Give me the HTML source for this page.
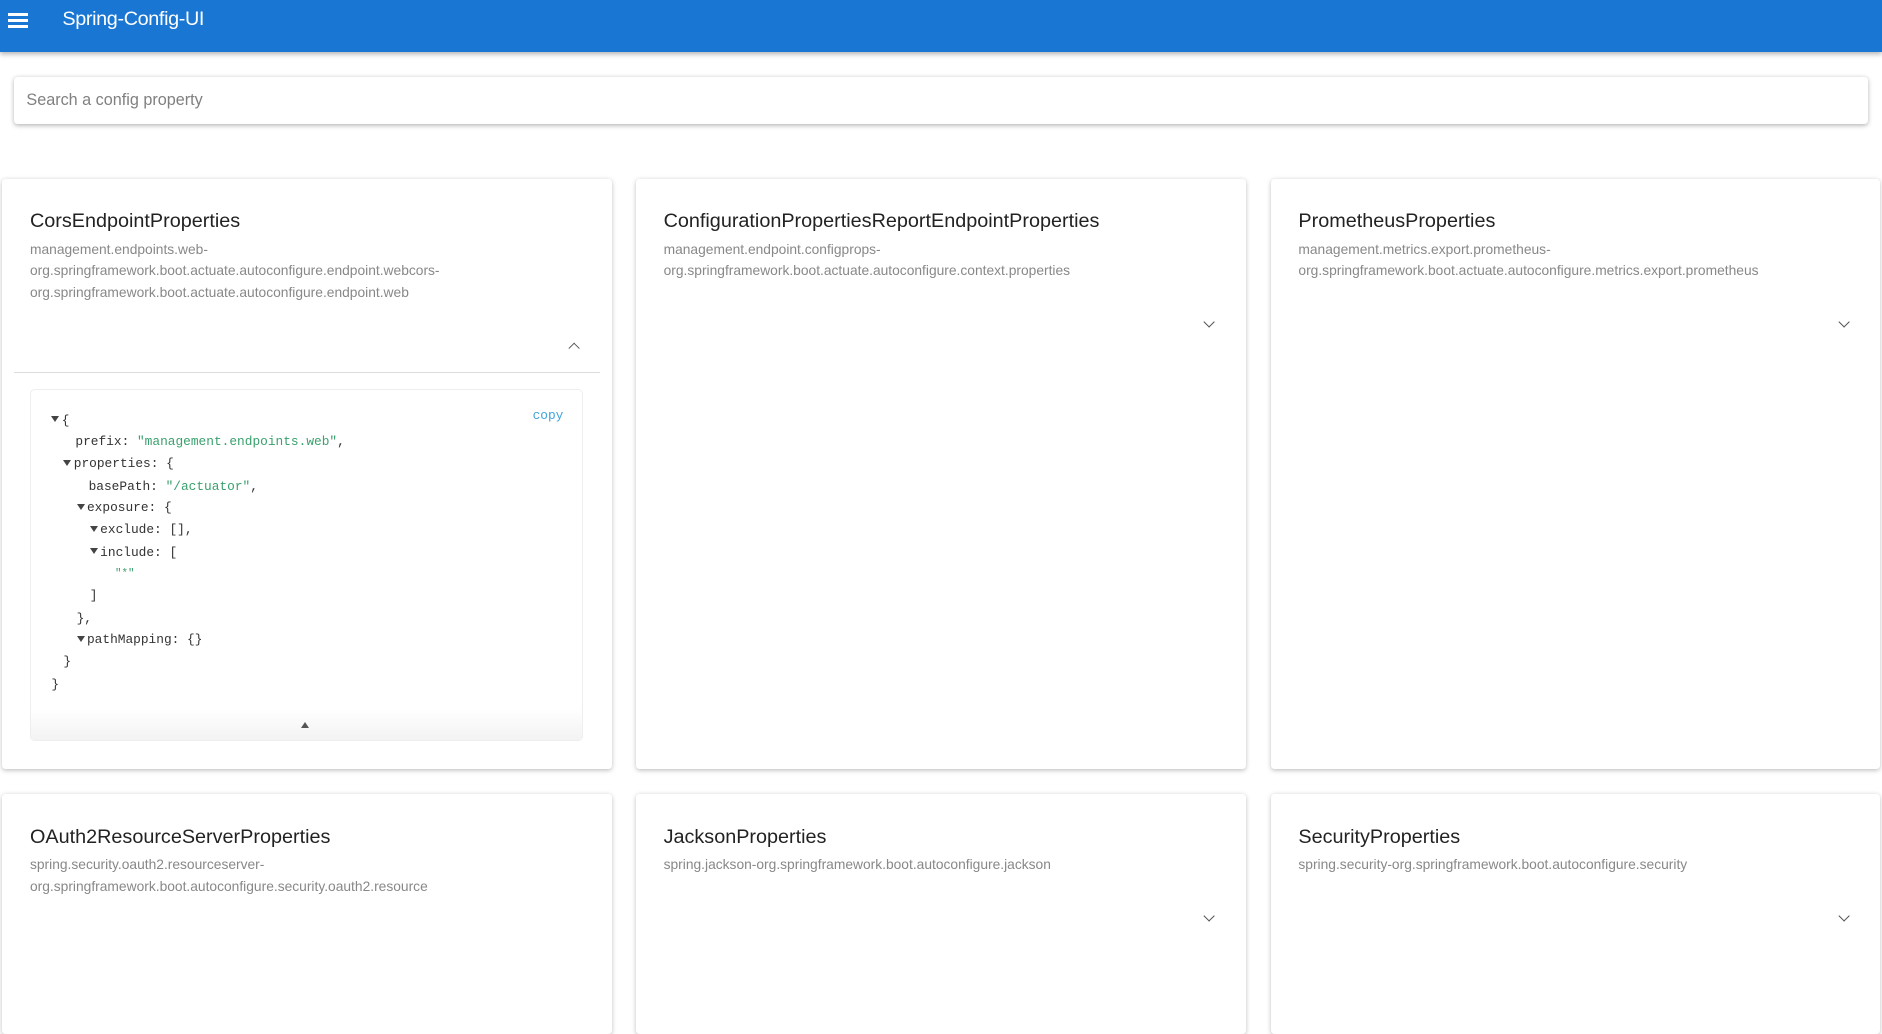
<!DOCTYPE html>
<html><head><meta charset="utf-8"><style>
html{zoom:1.2}
body{margin:0;width:1568px;height:766px;overflow:hidden;background:#fff;font-family:"Liberation Sans",sans-serif;position:relative}
.hdr{position:absolute;left:0;top:0;width:1568px;height:43px;background:#1976d2;box-shadow:0 2px 4px rgba(0,0,0,.3)}
.hdr .t{position:absolute;left:52px;top:7px;color:#fff;font-size:16.5px;letter-spacing:-0.3px}
.ham{position:absolute;left:7px;top:11px;width:16px}
.ham i{display:block;height:2px;background:#fff;margin-bottom:3px}
.search{position:absolute;left:12px;top:64px;width:1545px;height:39px;background:#fff;border-radius:3px;box-shadow:0 1px 4px rgba(0,0,0,.3)}
.search span{position:absolute;left:10px;top:12px;font-size:13.5px;color:#808080}
.card{position:absolute;background:#fff;border-radius:3px;box-shadow:0 1px 4px rgba(0,0,0,.25)}
.card h2{position:absolute;left:23px;top:26px;margin:0;font-weight:normal;font-size:16.5px;color:#222}
.card .s{position:absolute;left:23px;top:50px;font-size:11.5px;line-height:18px;color:#888;white-space:nowrap}
.chev{position:absolute;width:6px;height:6px;border-right:1.3px solid #555;border-bottom:1.3px solid #555;transform:rotate(45deg)}
.up{transform:rotate(-135deg)}
.json{position:absolute;left:23px;top:175px;width:459px;height:292px;border:1px solid #eee;border-radius:4px;font-family:"Liberation Mono",monospace;font-size:10.7px;color:#333}
.json .l{position:absolute;white-space:pre;line-height:14px}
.g{color:#3aa06d}
.tri{display:inline-block;width:0;height:0;border-left:4px solid transparent;border-right:4px solid transparent;border-top:5px solid #444;margin-right:2px;vertical-align:1px}
</style></head><body>
<div class="hdr"><div class="ham"><i></i><i></i><i></i></div><div class="t">Spring-Config-UI</div></div>
<div class="search"><span>Search a config property</span></div>

<div class="card" style="left:2px;top:149px;width:508px;height:492px">
<h2>CorsEndpointProperties</h2>
<div class="s">management.endpoints.web-<br>org.springframework.boot.actuate.autoconfigure.endpoint.webcors-<br>org.springframework.boot.actuate.autoconfigure.endpoint.web</div>
<div class="chev up" style="left:473px;top:138px"></div>
<div style="position:absolute;left:10px;top:161px;width:488px;height:1px;background:#ddd"></div>
<div class="json">
<div class="l" style="left:17px;top:19px"><span class="tri"></span>{</div>
<div class="l" style="left:37px;top:37px">prefix: <span class="g">"management.endpoints.web"</span>,</div>
<div class="l" style="left:27px;top:55px"><span class="tri"></span>properties: {</div>
<div class="l" style="left:48px;top:74px">basePath: <span class="g">"/actuator"</span>,</div>
<div class="l" style="left:38px;top:92px"><span class="tri"></span>exposure: {</div>
<div class="l" style="left:49px;top:110px"><span class="tri"></span>exclude: [],</div>
<div class="l" style="left:49px;top:129px"><span class="tri"></span>include: [</div>
<div class="l g" style="left:70px;top:147px;font-size:9px">"*"</div>
<div class="l" style="left:49px;top:165px">]</div>
<div class="l" style="left:38px;top:184px">},</div>
<div class="l" style="left:38px;top:202px"><span class="tri"></span>pathMapping: {}</div>
<div class="l" style="left:27px;top:220px">}</div>
<div class="l" style="left:17px;top:239px">}</div>
<div class="l" style="left:418px;top:15px;color:#42a5dc">copy</div>
<div style="position:absolute;left:0;bottom:0;width:459px;height:26px;background:linear-gradient(#fff,#f3f3f3)"></div>
<div style="position:absolute;left:225px;top:277px;width:0;height:0;border-left:4px solid transparent;border-right:4px solid transparent;border-bottom:5px solid #555"></div>
</div>
</div>

<div class="card" style="left:530px;top:149px;width:508px;height:492px">
<h2>ConfigurationPropertiesReportEndpointProperties</h2>
<div class="s">management.endpoint.configprops-<br>org.springframework.boot.actuate.autoconfigure.context.properties</div>
<div class="chev" style="left:474px;top:116px"></div>
</div>
<div class="card" style="left:1059px;top:149px;width:508px;height:492px">
<h2>PrometheusProperties</h2>
<div class="s">management.metrics.export.prometheus-<br>org.springframework.boot.actuate.autoconfigure.metrics.export.prometheus</div>
<div class="chev" style="left:474px;top:116px"></div>
</div>

<div class="card" style="left:2px;top:662px;width:508px;height:200px">
<h2>OAuth2ResourceServerProperties</h2>
<div class="s">spring.security.oauth2.resourceserver-<br>org.springframework.boot.autoconfigure.security.oauth2.resource</div>
</div>
<div class="card" style="left:530px;top:662px;width:508px;height:200px">
<h2>JacksonProperties</h2>
<div class="s">spring.jackson-org.springframework.boot.autoconfigure.jackson</div>
<div class="chev" style="left:474px;top:98px"></div>
</div>
<div class="card" style="left:1059px;top:662px;width:508px;height:200px">
<h2>SecurityProperties</h2>
<div class="s">spring.security-org.springframework.boot.autoconfigure.security</div>
<div class="chev" style="left:474px;top:98px"></div>
</div>
</body></html>
